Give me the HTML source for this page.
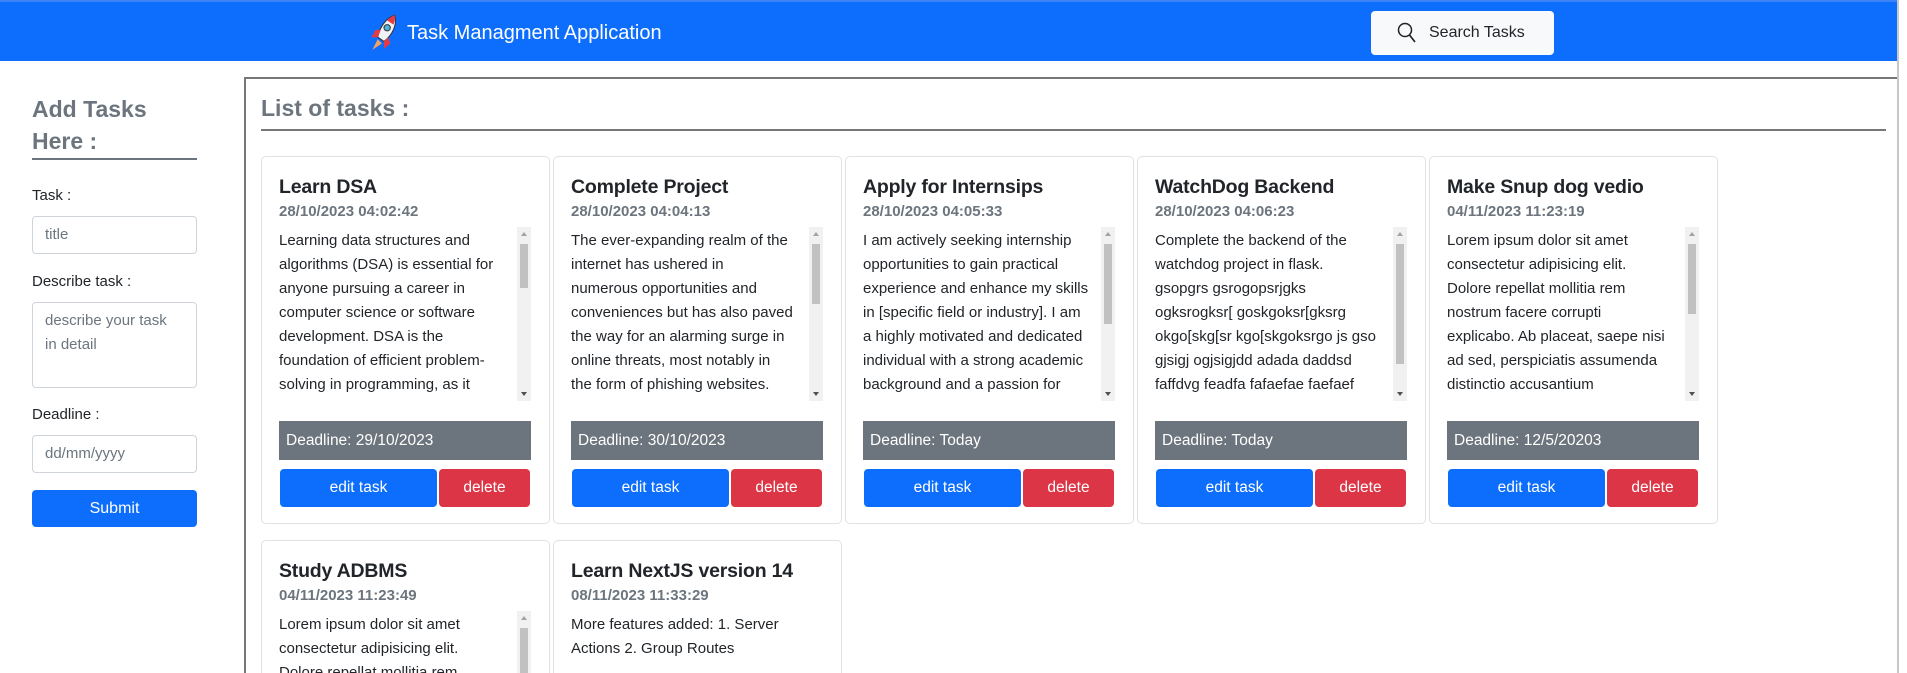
<!DOCTYPE html>
<html><head><meta charset="utf-8"><style>
*{box-sizing:border-box;margin:0;padding:0}
html,body{width:1907px;height:673px;overflow:hidden}
body{background:#fff;font-family:"Liberation Sans",sans-serif;color:#212529;position:relative}
#wrap{position:absolute;left:0;top:0;width:1907px;height:673px;overflow:hidden}
.nav{position:absolute;left:0;top:0;width:1897px;height:61px;background:#0d6efd;border-top:2px solid #3b82f6}
.brand{position:absolute;left:364px;top:10px;color:#fff;font-size:20px;display:flex;align-items:center;gap:3px}
.search{position:absolute;left:1371px;top:9px;width:183px;height:44px;background:#f8f9fa;border-radius:4px;font-size:16px;color:#212529;display:flex;align-items:center;padding-left:26px;gap:12px}
.vscroll{position:absolute;left:1897px;top:0;width:10px;height:673px;background:#fff;border-left:2px solid #c8c8c8}
.side h3{position:absolute;left:32px;top:93px;font-size:23px;color:#6c757d;font-weight:bold;line-height:32px}
.hr1{position:absolute;left:32px;top:158px;width:165px;height:2px;background:#6c757d}
.lbl{position:absolute;left:32px;font-size:15px;color:#212529}
.inp{position:absolute;left:32px;width:165px;border:1px solid #ced4da;border-radius:4px;font-size:15px;color:#6c757d;padding:12px 12px}
.submit{position:absolute;left:32px;top:490px;width:165px;height:37px;background:#0d6efd;color:#fff;border-radius:4px;font-size:16px;text-align:center;line-height:37px}
.main{position:absolute;left:244px;top:77px;width:1653px;height:596px;border-left:2px solid #777;border-top:2px solid #777}
.hr2{position:absolute;left:261px;top:129px;width:1625px;height:2px;background:#777}
.card{position:absolute;width:289px;height:368px;border:1px solid #dee2e6;border-radius:5px;background:#fff;overflow:hidden}
.card .t{position:absolute;left:17px;top:19px;font-size:19.5px;font-weight:bold;color:#212529;white-space:nowrap;letter-spacing:-.2px}
.card .d{position:absolute;left:17px;top:46px;font-size:15px;font-weight:bold;color:#6c757d}
.card .b{position:absolute;left:17px;top:70px;width:252px;height:174px;overflow:hidden;font-size:15px;line-height:24px;white-space:nowrap;padding-top:2px}
.sb{position:absolute;right:0;top:0;width:14px;height:174px;background:#f1f1f1}
.sb i{position:absolute;left:3px;width:8px;background:#c1c1c1}
.sb .up,.sb .dn{position:absolute;left:4px;width:0;height:0;border-left:3px solid transparent;border-right:3px solid transparent}
.sb .up{top:5px;border-bottom:4px solid #a3a3a3}
.sb .dn{bottom:5px;border-top:4px solid #505050}
.dl{position:absolute;left:17px;top:264px;width:252px;height:39px;background:#6c757d;color:#fff;font-size:15.5px;line-height:39px;padding-left:7px}
.ed{position:absolute;left:18px;top:312px;width:157px;height:38px;background:#0d6efd;color:#fff;border-radius:4px;text-align:center;line-height:38px;font-size:15.5px}
.de{position:absolute;left:177px;top:312px;width:91px;height:38px;background:#dc3545;color:#fff;border-radius:4px;text-align:center;line-height:38px;font-size:15.5px}
.r2{height:133px;border-bottom:none;border-radius:5px 5px 0 0}
</style></head><body><div id="wrap">
<div class="nav">
 <div class="brand"><svg width="40" height="42" viewBox="0 0 36 40"><path d="M28 3 C20 6 14 14 12 24 L18 28 C26 22 31 12 28 3Z" fill="#eef3f7" stroke="#333" stroke-width="1"/><path d="M28 3 C25 4 23 6 21 8 L27 12 C28 9 29 6 28 3Z" fill="#e63946"/><circle cx="21" cy="15" r="3" fill="#4fb3d9" stroke="#333"/><path d="M12 24 L6 24 L10 17 L15 17Z" fill="#e63946"/><path d="M18 28 L18 35 L24 30 L22 24Z" fill="#e63946"/><path d="M12 26 L7 36 L16 30Z" fill="#f4a261"/></svg>Task Managment Application</div>
 <div class="search"><svg width="20" height="22" viewBox="0 0 20 22"><circle cx="8" cy="8" r="6.5" fill="none" stroke="#222" stroke-width="1.5"/><line x1="12.5" y1="13" x2="18" y2="20" stroke="#222" stroke-width="1.7"/></svg>Search Tasks</div>
</div>
<div class="vscroll"></div>
<div class="side">
 <h3>Add Tasks<br>Here :</h3>
 <div class="hr1"></div>
 <div class="lbl" style="top:187px">Task :</div>
 <div class="inp" style="top:216px;height:38px;padding-top:9px">title</div>
 <div class="lbl" style="top:273px">Describe task :</div>
 <div class="inp" style="top:302px;height:86px;line-height:24px;padding-top:6px">describe your task<br>in detail</div>
 <div class="lbl" style="top:406px">Deadline :</div>
 <div class="inp" style="top:435px;height:38px;padding-top:9px">dd/mm/yyyy</div>
 <div class="submit">Submit</div>
</div>
<div class="main"></div>
<h2 style="position:absolute;left:261px;top:95px;font-size:23px;color:#6c757d;font-weight:bold">List of tasks :</h2>
<div class="hr2"></div>

<div class="card" style="left:261px;top:156px"><div class="t">Learn DSA</div><div class="d">28/10/2023 04:02:42</div>
<div class="b">Learning data structures and<br>algorithms (DSA) is essential for<br>anyone pursuing a career in<br>computer science or software<br>development. DSA is the<br>foundation of efficient problem-<br>solving in programming, as it<br>equips you with the tools and<div class="sb"><span class="up"></span><i style="top:17px;height:44px"></i><span class="dn"></span></div></div>
<div class="dl">Deadline: 29/10/2023</div><div class="ed">edit task</div><div class="de">delete</div></div>

<div class="card" style="left:553px;top:156px"><div class="t">Complete Project</div><div class="d">28/10/2023 04:04:13</div>
<div class="b">The ever-expanding realm of the<br>internet has ushered in<br>numerous opportunities and<br>conveniences but has also paved<br>the way for an alarming surge in<br>online threats, most notably in<br>the form of phishing websites.<br>Phishing attacks are<div class="sb"><span class="up"></span><i style="top:17px;height:60px"></i><span class="dn"></span></div></div>
<div class="dl">Deadline: 30/10/2023</div><div class="ed">edit task</div><div class="de">delete</div></div>

<div class="card" style="left:845px;top:156px"><div class="t">Apply for Internsips</div><div class="d">28/10/2023 04:05:33</div>
<div class="b">I am actively seeking internship<br>opportunities to gain practical<br>experience and enhance my skills<br>in [specific field or industry]. I am<br>a highly motivated and dedicated<br>individual with a strong academic<br>background and a passion for<br>[relevant skills or interests]. I am<div class="sb"><span class="up"></span><i style="top:17px;height:80px"></i><span class="dn"></span></div></div>
<div class="dl">Deadline: Today</div><div class="ed">edit task</div><div class="de">delete</div></div>

<div class="card" style="left:1137px;top:156px"><div class="t">WatchDog Backend</div><div class="d">28/10/2023 04:06:23</div>
<div class="b">Complete the backend of the<br>watchdog project in flask.<br>gsopgrs gsrogopsrjgks<br>ogksrogksr[ goskgoksr[gksrg<br>okgo[skg[sr kgo[skgoksrgo js gso<br>gjsigj ogjsigjdd adada daddsd<br>faffdvg feadfa fafaefae faefaef<br>efaefdfaefaefaefdfaefaefaefaef<div class="sb"><span class="up"></span><i style="top:17px;height:120px"></i><span class="dn"></span></div></div>
<div class="dl">Deadline: Today</div><div class="ed">edit task</div><div class="de">delete</div></div>

<div class="card" style="left:1429px;top:156px"><div class="t">Make Snup dog vedio</div><div class="d">04/11/2023 11:23:19</div>
<div class="b">Lorem ipsum dolor sit amet<br>consectetur adipisicing elit.<br>Dolore repellat mollitia rem<br>nostrum facere corrupti<br>explicabo. Ab placeat, saepe nisi<br>ad sed, perspiciatis assumenda<br>distinctio accusantium<br>voluptatem aspernatur quos<div class="sb"><span class="up"></span><i style="top:17px;height:70px"></i><span class="dn"></span></div></div>
<div class="dl">Deadline: 12/5/20203</div><div class="ed">edit task</div><div class="de">delete</div></div>

<div class="card r2" style="left:261px;top:540px"><div class="t">Study ADBMS</div><div class="d">04/11/2023 11:23:49</div>
<div class="b" style="height:63px">Lorem ipsum dolor sit amet<br>consectetur adipisicing elit.<br>Dolore repellat mollitia rem<div class="sb" style="height:63px"><span class="up"></span><i style="top:17px;height:46px"></i></div></div></div>

<div class="card r2" style="left:553px;top:540px"><div class="t">Learn NextJS version 14</div><div class="d">08/11/2023 11:33:29</div>
<div class="b" style="height:63px">More features added: 1. Server<br>Actions 2. Group Routes</div></div>
</div></body></html>
